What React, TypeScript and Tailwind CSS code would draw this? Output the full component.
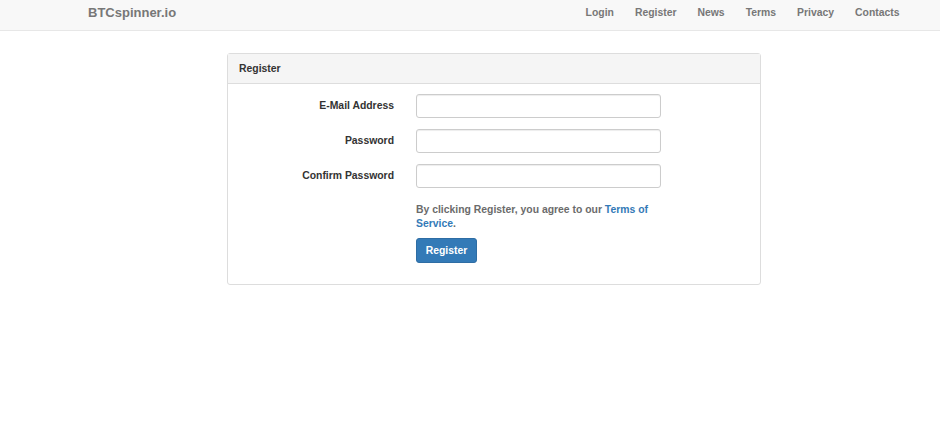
import React from 'react'

const navLinks = ['Login', 'Register', 'News', 'Terms', 'Privacy', 'Contacts']

const fields = [
  { label: 'E-Mail Address', type: 'email' },
  { label: 'Password', type: 'password' },
  { label: 'Confirm Password', type: 'password' },
]

const App = () => {
  return (
    <div className="min-h-screen w-full bg-white font-['Liberation_Sans',Arial,sans-serif] text-[10.4px] font-bold text-[#333]">
      {/* Navbar */}
      <nav className="flex h-[31px] items-center justify-between border-b border-[#e7e7e7] bg-[#f8f8f8] pb-[5px] pl-[88px] pr-[30px]">
        <div className="text-[13px] font-bold text-[#777]">BTCspinner.io</div>
        <ul className="flex flex-row">
          {navLinks.map((l) => (
            <li key={l} className="px-[10.5px] text-[10.4px] text-[#777]">
              {l}
            </li>
          ))}
        </ul>
      </nav>

      {/* Panel */}
      <div className="ml-[227px] mt-[22px] w-[534px] rounded-[3px] border border-[#ddd]">
        <div className="flex h-[30px] items-center border-b border-[#ddd] bg-[#f5f5f5] px-[11px]">
          Register
        </div>
        <div className="flex flex-col pb-[21px] pt-[10px]">
          {fields.map((f) => (
            <div key={f.label} className="mb-[11px] flex flex-row items-center">
              <label className="w-[166px] text-right">{f.label}</label>
              <div className="ml-[22px] w-[245px]">
                <input
                  type={f.type}
                  className="h-[24px] w-full rounded-[3px] border border-[#ccc] bg-white shadow-[inset_0_1px_1px_rgba(0,0,0,0.075)]"
                />
              </div>
            </div>
          ))}
          <div className="ml-[188px] mt-[4px] w-[245px] leading-[14px] text-[#6b6b6b]">
            By clicking Register, you agree to our{' '}
            <span className="text-[#337ab7]">Terms of Service</span>.
          </div>
          <div className="ml-[188px] mt-[7px]">
            <button className="h-[25px] w-[61px] rounded-[3px] border border-[#2e6da4] bg-[#337ab7] text-[10.4px] font-bold text-white">
              Register
            </button>
          </div>
        </div>
      </div>
    </div>
  )
}

export default App
